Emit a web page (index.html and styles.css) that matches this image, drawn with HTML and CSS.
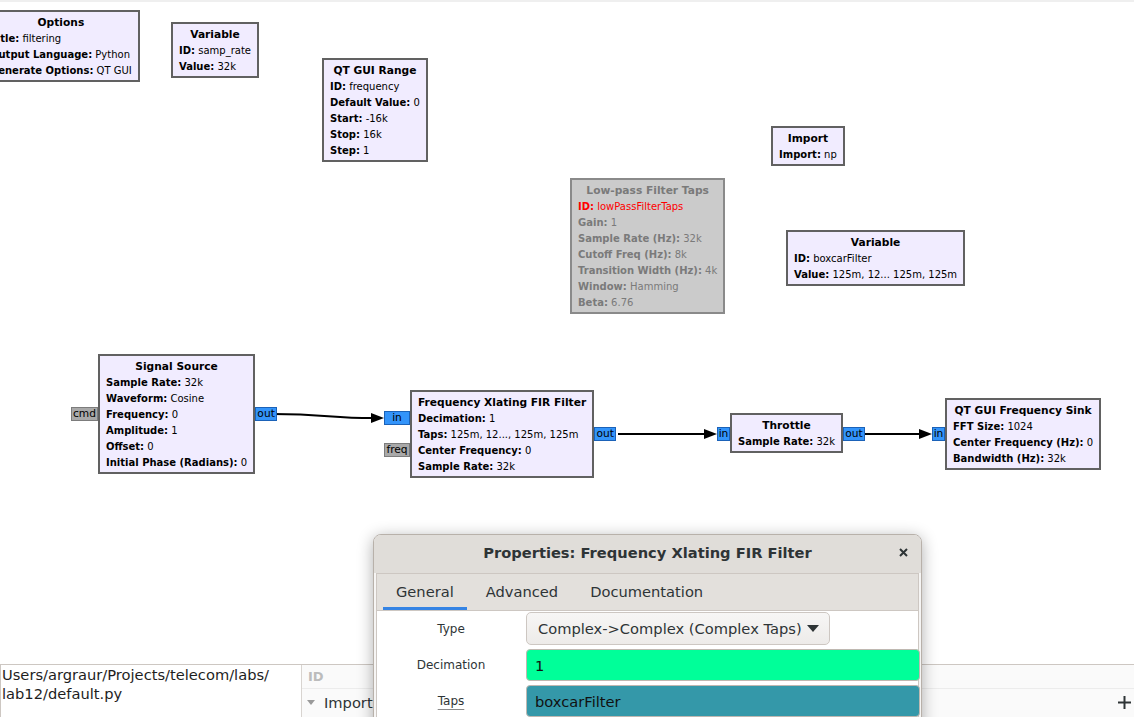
FILE: index.html
```html
<!DOCTYPE html>
<html>
<head>
<meta charset="utf-8">
<title>GNU Radio Companion</title>
<link rel="stylesheet" href="styles.css">
</head>
<body>
<div class="app">
  <div class="canvas">
    <svg class="wires" width="1134" height="664" viewBox="0 0 1134 664">
      <path d="M273 414 C 325 414, 330 418, 373 418" fill="none" stroke="#000" stroke-width="2"/>
      <polygon points="371,413 384,418 371,423" fill="#000"/>
      <path d="M618 434 L706 434" fill="none" stroke="#000" stroke-width="2"/>
      <polygon points="704,429 717,434 704,439" fill="#000"/>
      <path d="M865 434 L921 434" fill="none" stroke="#000" stroke-width="2"/>
      <polygon points="919,429 932,434 919,439" fill="#000"/>
    </svg>

    <div class="block b-options">
      <div class="title">Options</div>
      <div><b>Title:</b> filtering</div>
      <div><b>Output Language:</b> Python</div>
      <div><b>Generate Options:</b> QT GUI</div>
    </div>

    <div class="block b-var1">
      <div class="title">Variable</div>
      <div><b>ID:</b> samp_rate</div>
      <div><b>Value:</b> 32k</div>
    </div>

    <div class="block b-range">
      <div class="title">QT GUI Range</div>
      <div><b>ID:</b> frequency</div>
      <div><b>Default Value:</b> 0</div>
      <div><b>Start:</b> -16k</div>
      <div><b>Stop:</b> 16k</div>
      <div><b>Step:</b> 1</div>
    </div>

    <div class="block disabled b-lpf">
      <div class="title">Low-pass Filter Taps</div>
      <div class="err"><b>ID:</b> lowPassFilterTaps</div>
      <div><b>Gain:</b> 1</div>
      <div><b>Sample Rate (Hz):</b> 32k</div>
      <div><b>Cutoff Freq (Hz):</b> 8k</div>
      <div><b>Transition Width (Hz):</b> 4k</div>
      <div><b>Window:</b> Hamming</div>
      <div><b>Beta:</b> 6.76</div>
    </div>

    <div class="block b-import">
      <div class="title">Import</div>
      <div><b>Import:</b> np</div>
    </div>

    <div class="block b-var2">
      <div class="title">Variable</div>
      <div><b>ID:</b> boxcarFilter</div>
      <div><b>Value:</b> 125m, 12... 125m, 125m</div>
    </div>

    <div class="block b-sigsrc">
      <div class="title">Signal Source</div>
      <div><b>Sample Rate:</b> 32k</div>
      <div><b>Waveform:</b> Cosine</div>
      <div><b>Frequency:</b> 0</div>
      <div><b>Amplitude:</b> 1</div>
      <div><b>Offset:</b> 0</div>
      <div><b>Initial Phase (Radians):</b> 0</div>
      <div class="port msg p-in p-cmd">cmd</div>
      <div class="port p-out p-src-out">out</div>
    </div>

    <div class="block b-xlat">
      <div class="title">Frequency Xlating FIR Filter</div>
      <div><b>Decimation:</b> 1</div>
      <div><b>Taps:</b> 125m, 12..., 125m, 125m</div>
      <div><b>Center Frequency:</b> 0</div>
      <div><b>Sample Rate:</b> 32k</div>
      <div class="port p-in p-x-in">in</div>
      <div class="port msg p-in p-x-freq">freq</div>
      <div class="port p-out p-x-out">out</div>
    </div>

    <div class="block b-throttle">
      <div class="title">Throttle</div>
      <div><b>Sample Rate:</b> 32k</div>
      <div class="port p-in p-t-in">in</div>
      <div class="port p-out p-t-out">out</div>
    </div>

    <div class="block b-sink">
      <div class="title">QT GUI Frequency Sink</div>
      <div><b>FFT Size:</b> 1024</div>
      <div><b>Center Frequency (Hz):</b> 0</div>
      <div><b>Bandwidth (Hz):</b> 32k</div>
      <div class="port p-in p-s-in">in</div>
    </div>
  </div>

  <div class="bottom">
    <div class="console">
      <div class="console-text">
        <div>Using: /opt/py/bin/python3 -u /</div>
        <div>Users/argraur/Projects/telecom/labs/</div>
        <div>lab12/default.py</div>
      </div>
    </div>
    <div class="vars">
      <div class="vars-head">ID</div>
      <div class="vars-row">
        <span class="expander"></span>
        <span class="vars-name">Imports</span>
        <svg class="plus" width="13" height="13" viewBox="0 0 13 13"><path d="M6.5 0 V13 M0 6.5 H13" stroke="#2e3436" stroke-width="2"/></svg>
      </div>
    </div>
  </div>

  <div class="dialog">
    <div class="dlg-head">
      <span>Properties: Frequency Xlating FIR Filter</span>
      <svg class="dlg-close" width="9" height="9" viewBox="0 0 9 9"><path d="M1 1 L8 8 M8 1 L1 8" stroke="#2e3436" stroke-width="2"/></svg>
    </div>
    <div class="notebook">
      <div class="tabs">
        <div class="tab active">General</div>
        <div class="tab">Advanced</div>
        <div class="tab">Documentation</div>
      </div>
      <div class="form">
        <div class="lbl">Type</div>
        <div class="combo">
          <span>Complex-&gt;Complex (Complex Taps)</span>
          <svg width="12" height="7" viewBox="0 0 12 7"><polygon points="0,0 12,0 6,7" fill="#2e3436"/></svg>
        </div>
        <div class="lbl">Decimation</div>
        <div class="entry ok">1</div>
        <div class="lbl hint">Taps</div>
        <div class="entry var">boxcarFilter</div>
      </div>
    </div>
  </div>
</div>
</body>
</html>
```
FILE: styles.css
```css
* { box-sizing: border-box; }
html, body { margin: 0; padding: 0; }
body {
  width: 1134px;
  height: 717px;
  overflow: hidden;
  background: #fff;
  font-family: "DejaVu Sans", sans-serif;
}
.app {
  position: relative;
  width: 1134px;
  height: 717px;
  display: flex;
  flex-direction: column;
}

/* ---------- flow graph canvas ---------- */
.canvas {
  position: relative;
  flex: none;
  height: 664px;
  background: #fff;
  box-shadow: inset 0 2px 0 #efefef;
  overflow: hidden;
}
.wires { position: absolute; left: 0; top: 0; }

.block {
  position: absolute;
  white-space: nowrap;
  background: #f1ecff;
  border: 2px solid #616161;
  padding: 3px 6px 1px;
  font-size: 10px;
  line-height: 16px;
  color: #000;
}
.block .title {
  font-weight: bold;
  font-size: 10.67px;
  text-align: center;
}
.block b { font-weight: bold; }
.block.disabled {
  background: #cbcbcb;
  border-color: #8a8a8a;
  color: #7a7a7a;
}
.block.disabled .err { color: #ff0000; }

.b-options { left: -18px; top: 10px; }
.b-var1 { left: 171px; top: 22px; }
.b-range { left: 322px; top: 58px; }
.b-lpf { left: 570px; top: 178px; }
.b-import { left: 771px; top: 126px; }
.b-var2 { left: 786px; top: 230px; }
.b-sigsrc { left: 98px; top: 354px; }
.b-xlat { left: 410px; top: 390px; }
.b-throttle { left: 730px; top: 413px; }
.b-sink { left: 945px; top: 398px; }

/* ports */
.port {
  position: absolute;
  height: 14px;
  font-size: 10.67px;
  line-height: 12px;
  text-align: center;
  background: #3394fa;
  border: 1px solid #1b62b8;
  color: #000;
}
.port.msg { background: #a9a9a9; border-color: #7c7c7c; }
.p-in { right: 100%; margin-right: 2px; }
.p-out { left: 100%; margin-left: 2px; }
.p-cmd { top: 51px; width: 27px; }
.p-src-out { top: 51px; width: 22px; }
.p-x-in { top: 19px; width: 26px; }
.p-x-freq { top: 51px; width: 26px; }
.p-x-out { top: 35px; width: 22px; }
.p-t-in { top: 12px; width: 13px; }
.p-t-out { top: 12px; width: 22px; }
.p-s-in { top: 27px; width: 13px; }

/* ---------- bottom panels ---------- */
.bottom {
  flex: 1;
  display: flex;
  border-top: 1px solid #cdc7c2;
  min-height: 0;
}
.console {
  width: 302px;
  flex: none;
  overflow: hidden;
  background: #fff;
  border-left: 1px solid #cdc7c2;
  border-right: 1px solid #d8d4d0;
  font-size: 14.67px;
  line-height: 19px;
  color: #1e1e1e;
  padding-left: 1px;
}
.console-text { margin-top: -19px; white-space: nowrap; }
.vars {
  flex: 1;
  background: #fafafa;
  display: flex;
  flex-direction: column;
}
.vars-head {
  height: 24px;
  padding-left: 6px;
  display: flex;
  align-items: center;
  font-size: 13px;
  font-weight: bold;
  color: #bcbcbc;
  border-bottom: 1px solid #ececec;
}
.vars-row {
  height: 26px;
  display: flex;
  align-items: center;
  padding-left: 5px;
  padding-right: 3px;
  font-size: 14.67px;
  color: #2e3436;
}
.expander {
  width: 0;
  height: 0;
  border-left: 4px solid transparent;
  border-right: 4px solid transparent;
  border-top: 5px solid #9a9a9a;
  margin-right: 9px;
}
.vars-name { flex: 1; }
.plus { flex: none; }

/* ---------- properties dialog ---------- */
.dialog {
  position: absolute;
  left: 373px;
  top: 534px;
  width: 549px;
  height: 200px;
  display: flex;
  flex-direction: column;
  background: #f6f5f4;
  border: 1px solid #b8b1aa;
  border-radius: 8px 8px 0 0;
  box-shadow: 0 3px 16px rgba(0, 0, 0, 0.32);
  color: #2e3436;
  overflow: hidden;
}
.dlg-head {
  position: relative;
  height: 38px;
  flex: none;
  display: flex;
  align-items: center;
  justify-content: center;
  padding-bottom: 4px;
  background: #e0ddd9;
  font-size: 14.67px;
  font-weight: bold;
}
.dlg-close { position: absolute; right: 13px; top: 13px; }
.notebook {
  flex: 1;
  margin: 0 2px;
  border: 1px solid #cdc7c2;
  border-bottom: none;
  background: #fff;
}
.tabs {
  height: 37px;
  display: flex;
  gap: 6px;
  padding: 0 6px;
  background: #e3e0dc;
  border-bottom: 1px solid #cdc7c2;
}
.tab {
  display: flex;
  align-items: center;
  padding: 1px 13px 0;
  font-size: 14.67px;
  border-bottom: 3px solid transparent;
}
.tab.active { border-bottom-color: #3584e4; }

.form {
  display: grid;
  grid-template-columns: 148px 1fr;
  column-gap: 1px;
  row-gap: 4px;
  padding-top: 1px;
  margin-right: -2px;
  align-items: center;
}
.lbl {
  text-align: center;
  font-size: 12px;
  color: #2e3436;
}
.lbl.hint {
  text-decoration: underline;
  text-decoration-color: #8a8a8a;
  text-underline-offset: 4px;
}
.combo {
  justify-self: start;
  height: 33px;
  display: flex;
  align-items: center;
  gap: 5px;
  padding: 0 10px 0 11px;
  border: 1px solid #cdc7c2;
  border-radius: 5px;
  background: linear-gradient(#f7f6f5, #edebe9);
  font-size: 14.67px;
  color: #2e3436;
  white-space: nowrap;
}
.entry {
  height: 32px;
  display: flex;
  align-items: center;
  padding-left: 8px;
  border: 1px solid #bfb8b1;
  border-radius: 4px;
  font-size: 14.67px;
  color: #111;
}
.entry.ok { background: #00ff99; }
.entry.var { background: #3498a9; }
```
